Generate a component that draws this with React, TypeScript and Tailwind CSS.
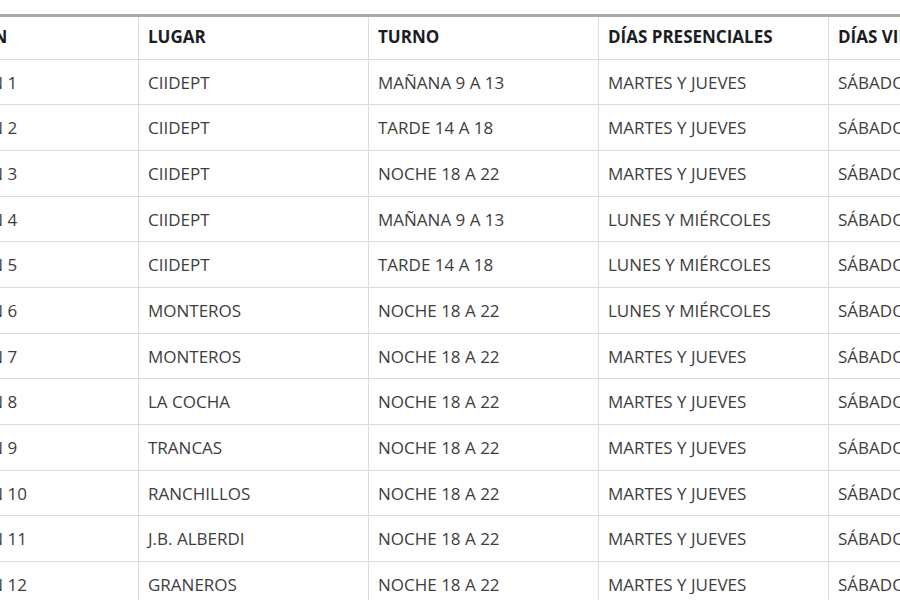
const rows = [
  ["COMISIÓN 1", "CIIDEPT", "MAÑANA 9 A 13", "MARTES Y JUEVES", "SÁBADOS"],
  ["COMISIÓN 2", "CIIDEPT", "TARDE 14 A 18", "MARTES Y JUEVES", "SÁBADOS"],
  ["COMISIÓN 3", "CIIDEPT", "NOCHE 18 A 22", "MARTES Y JUEVES", "SÁBADOS"],
  ["COMISIÓN 4", "CIIDEPT", "MAÑANA 9 A 13", "LUNES Y MIÉRCOLES", "SÁBADOS"],
  ["COMISIÓN 5", "CIIDEPT", "TARDE 14 A 18", "LUNES Y MIÉRCOLES", "SÁBADOS"],
  ["COMISIÓN 6", "MONTEROS", "NOCHE 18 A 22", "LUNES Y MIÉRCOLES", "SÁBADOS"],
  ["COMISIÓN 7", "MONTEROS", "NOCHE 18 A 22", "MARTES Y JUEVES", "SÁBADOS"],
  ["COMISIÓN 8", "LA COCHA", "NOCHE 18 A 22", "MARTES Y JUEVES", "SÁBADOS"],
  ["COMISIÓN 9", "TRANCAS", "NOCHE 18 A 22", "MARTES Y JUEVES", "SÁBADOS"],
  ["COMISIÓN 10", "RANCHILLOS", "NOCHE 18 A 22", "MARTES Y JUEVES", "SÁBADOS"],
  ["COMISIÓN 11", "J.B. ALBERDI", "NOCHE 18 A 22", "MARTES Y JUEVES", "SÁBADOS"],
  ["COMISIÓN 12", "GRANEROS", "NOCHE 18 A 22", "MARTES Y JUEVES", "SÁBADOS"],
];

const headers = ["COMISIÓN", "LUGAR", "TURNO", "DÍAS PRESENCIALES", "DÍAS VIRTUALES"];

const cellCls = (i: number) =>
  i === 0 ? "w-[228px] shrink-0 flex items-center pl-[9px]" : "w-[230px] shrink-0 flex items-center pl-[9px] border-l border-[#dcdcdc]";

export default function App() {
  return (
    <div className="w-[900px] h-[600px] overflow-hidden bg-white pt-[14px] font-['Open_Sans',sans-serif] text-[17px]">
      <div className="ml-[-90px] w-[1200px] border-t-[3px] border-[#a9a9a9]">
        {/* Header */}
        <div className="flex h-[42.5px] border-b border-[#dcdcdc] font-bold text-[#1c1c24]">
          {headers.map((h, i) => (
            <div key={h} className={`${cellCls(i)} pb-[2px]`}>
              {h}
            </div>
          ))}
        </div>

        {/* Rows */}
        {rows.map((r, ri) => (
          <div key={ri} className="flex h-[45.7px] border-b border-[#dcdcdc] text-[#3d3d3d]">
            {r.map((c, i) => (
              <div key={i} className={`${cellCls(i)} pt-[1px]`}>
                {c}
              </div>
            ))}
          </div>
        ))}
      </div>
    </div>
  );
}
